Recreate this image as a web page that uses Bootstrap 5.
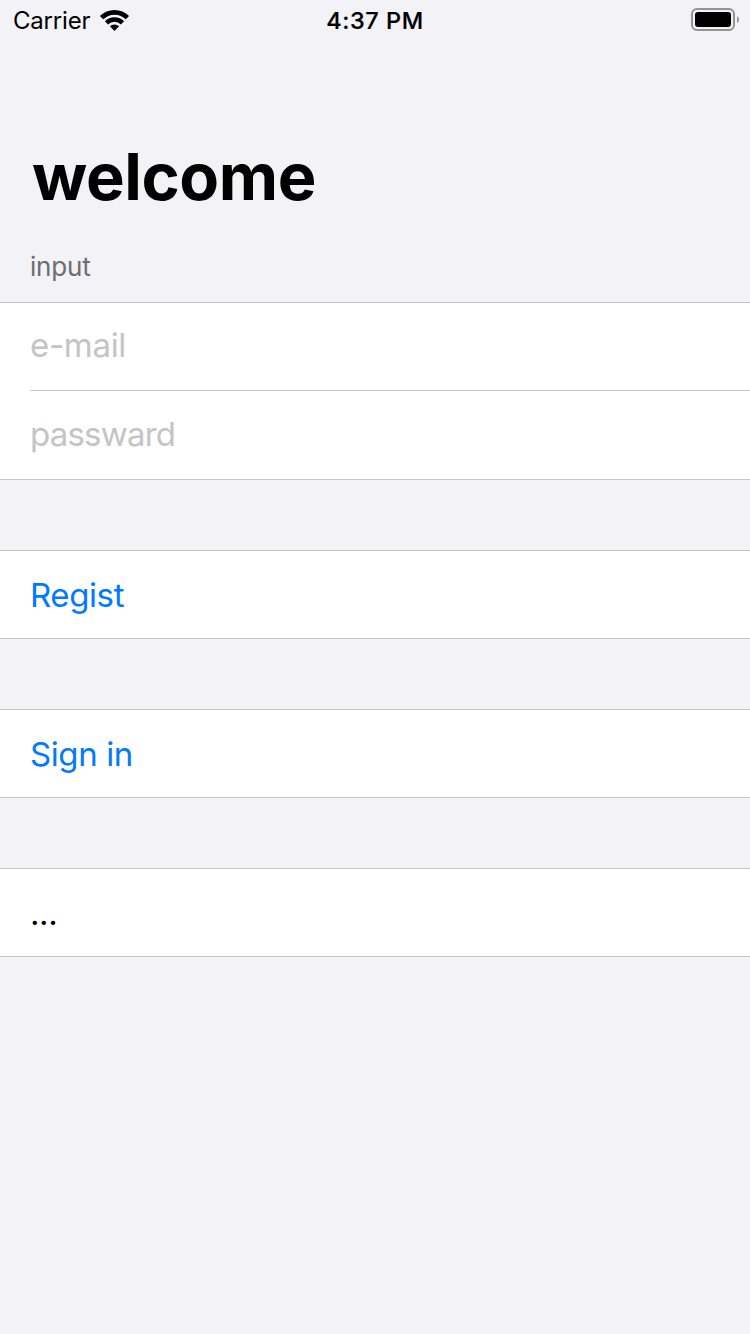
<!DOCTYPE html>
<html lang="en">
<head>
<meta charset="utf-8">
<meta name="viewport" content="width=device-width, initial-scale=1">
<title>welcome</title>
<link href="https://cdn.jsdelivr.net/npm/bootstrap@5.3.0/dist/css/bootstrap.min.css" rel="stylesheet">
<style>
body{background:#f2f2f7;font-family:Inter,sans-serif;color:#000;overflow:hidden}
.status-bar{height:40px;padding:0 11px 0 13px;font-size:24px;line-height:40px}
.status-side{width:130px}
.carrier{letter-spacing:-.2px;padding-top:2px;width:78px}
.clock{font-size:23.500px;font-weight:500;letter-spacing:.6px;padding-top:2px;margin-right:2px;-webkit-text-stroke:.2px #000}
.big-title{font-size:65px;font-weight:700;line-height:80px;margin:97px 0 0 32px;letter-spacing:-.4px}
.section-label{font-size:26px;line-height:32px;color:#6d6d72;margin:34px 0 19px 30px;letter-spacing:-.2px}
.group{margin-bottom:70px}
.cell{height:89px;padding:1px 0 0 30px;font-size:33px;line-height:87px;letter-spacing:-.4px}
.rule{border-top:1px solid #c6c6c8;border-bottom:1px solid #c6c6c8}
.field{border:0;padding:0 0 3px 30px;width:100%;font-size:33px;letter-spacing:-.3px;height:87px;outline:0}
.field.lower{height:88px;letter-spacing:-.8px}
.field::placeholder{color:#c4c4c6;opacity:1}
.divider{height:1px;background:#c6c6c8;margin-left:30px}
.action{color:#007aff}
</style>
</head>
<body>
<header class="status-bar d-flex justify-content-between align-items-center">
<div class="status-side d-flex align-items-center"><span class="carrier">Carrier</span>
<svg class="ms-2" width="31" height="22" viewBox="0 0 31 22"><path d="M15.500 22l-4.600-4.700a6.500 6.500 0 0 1 9.200 0zM9.100 15.400L5.900 12.200a13.600 13.600 0 0 1 19.200 0l-3.200 3.200a9 9 0 0 0-12.800 0zM4.200 10.300L.9 7a20.600 20.600 0 0 1 29.200 0l-3.300 3.300a16 16 0 0 0-22.600 0z"/></svg></div>
<span class="clock">4:37 PM</span>
<div class="status-side d-flex justify-content-end"><svg width="48" height="24" viewBox="0 0 48 24"><rect x="1" y="1" width="42" height="21" rx="5" fill="none" stroke="#949497" stroke-width="2"/><rect x="4" y="4" width="36" height="15" rx="3"/><path d="M46 8q2 1 2 3.500t-2 3.500z" fill="#949497"/></svg></div>
</header>
<main>
<h1 class="big-title">welcome</h1>
<div class="section-label">input</div>
<form class="group rule bg-white">
<input class="field d-block" type="text" placeholder="e-mail" aria-label="e-mail">
<div class="divider"></div>
<input class="field lower d-block" type="text" placeholder="passward" aria-label="passward">
</form>
<div class="group rule cell bg-white action">Regist</div>
<div class="group rule cell bg-white action">Sign in</div>
<div class="group rule cell bg-white">...</div>
</main>
<script src="https://cdn.jsdelivr.net/npm/bootstrap@5.3.0/dist/js/bootstrap.bundle.min.js"></script>
</body>
</html>
